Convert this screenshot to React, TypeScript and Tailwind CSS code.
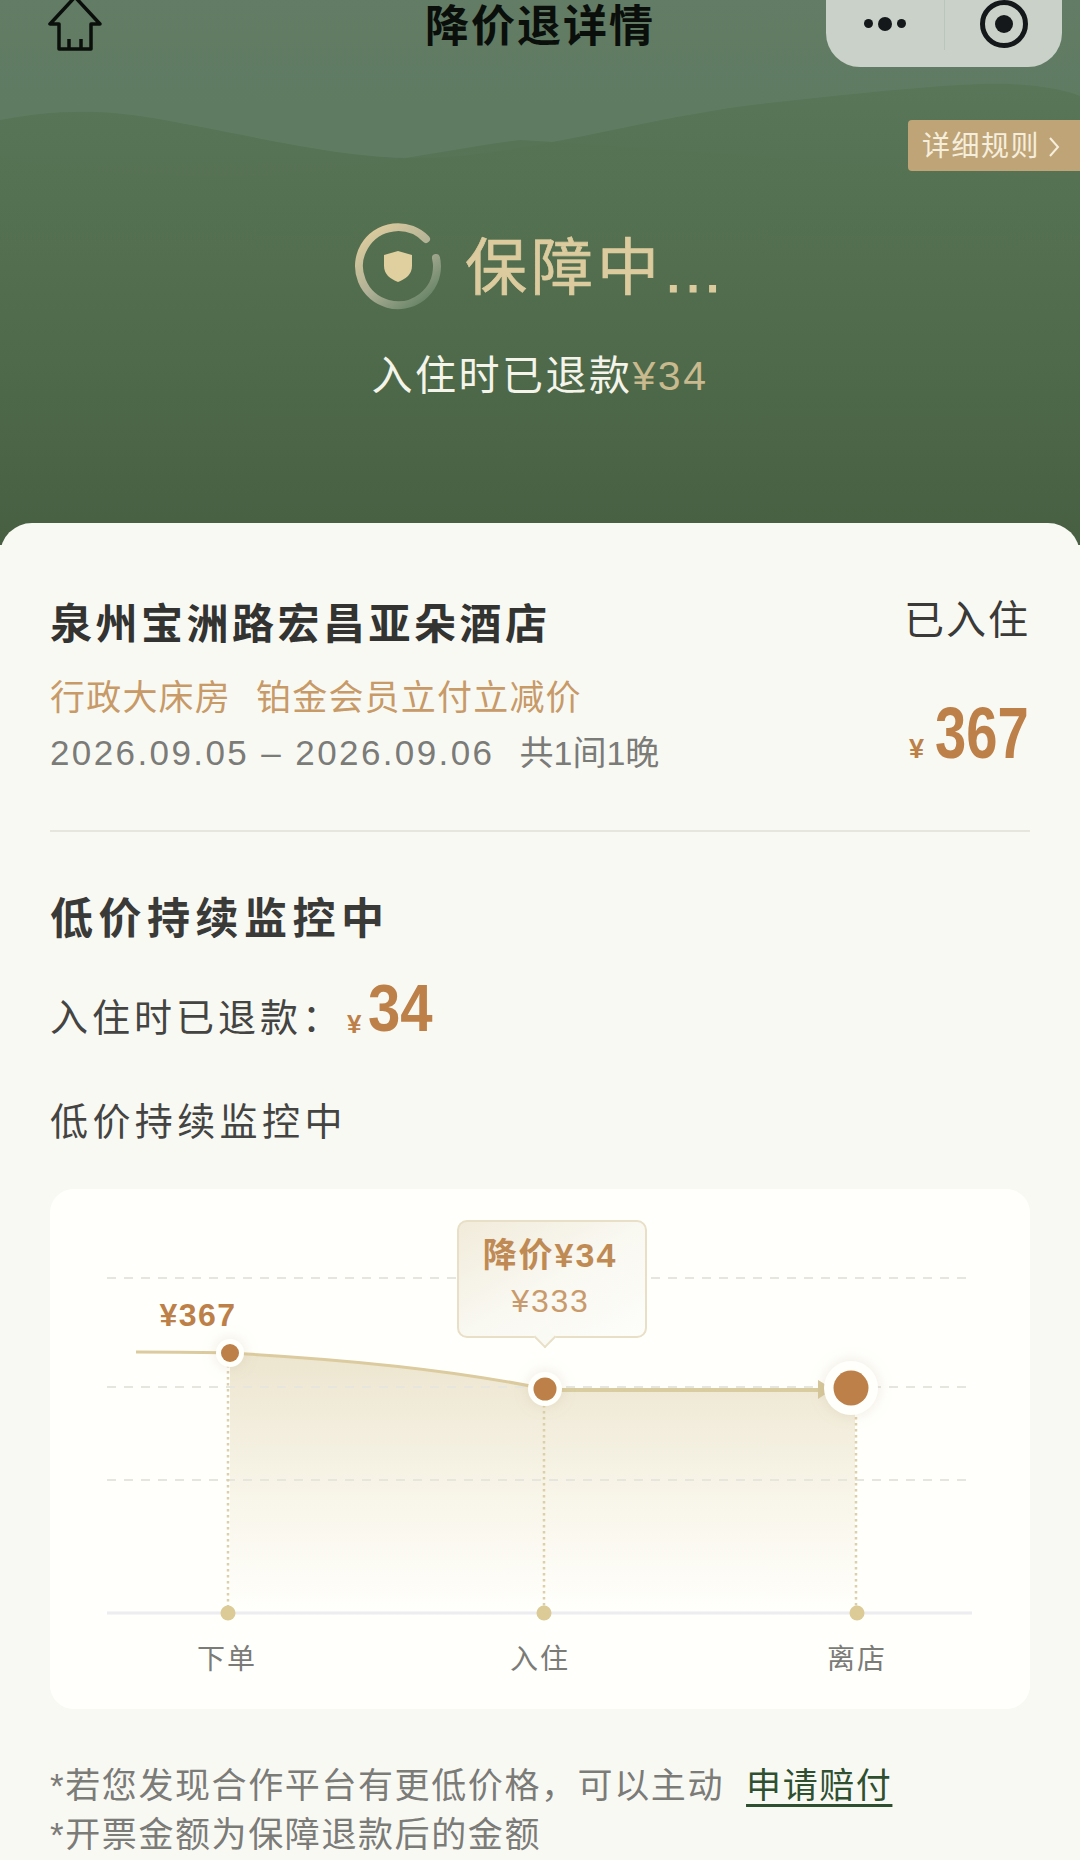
const App = () => {
  return (
    <div className="h-[1860px] w-[1080px] overflow-hidden bg-[#f9f9f4] font-['Liberation_Sans','Noto_Sans_CJK_SC',sans-serif]">
      {/* top green area */}
      <div className="relative h-[545px] bg-gradient-to-b from-[#637c65] via-[#5f7b62] via-20% to-[#5f7b62]">
        <svg className="absolute left-0 top-0" width="1080" height="545" viewBox="0 0 1080 545">
          <defs>
            <linearGradient id="hillA" gradientUnits="userSpaceOnUse" x1="0" y1="85" x2="0" y2="545">
              <stop offset="0" stopColor="#5a7659" />
              <stop offset="0.25" stopColor="#557152" />
              <stop offset="0.6" stopColor="#4e6a4a" />
              <stop offset="1" stopColor="#485f42" />
            </linearGradient>
            <linearGradient id="hillB" gradientUnits="userSpaceOnUse" x1="0" y1="140" x2="0" y2="260">
              <stop offset="0" stopColor="#567354" stopOpacity="0.9" />
              <stop offset="1" stopColor="#507050" stopOpacity="0" />
            </linearGradient>
          </defs>
          <path d="M0 120 C40 112 90 108 140 116 C230 130 330 158 415 158 C520 158 640 118 760 104 C850 94 960 82 1010 84 C1050 86 1070 92 1080 96 V545 H0 Z" fill="url(#hillA)" />
          <path d="M0 158 C80 172 170 178 250 176 C350 172 440 150 520 140 C700 150 900 170 1080 180 V300 H0 Z" fill="url(#hillB)" />
        </svg>

        <div className="relative flex h-[48px] items-start justify-between">
          <svg className="ml-[46px]" width="60" height="52" viewBox="0 0 60 52" fill="none" stroke="#0b0f0b" strokeWidth="3.5" strokeLinejoin="round">
            <path d="M29 -3 L4 24 H13 V49 H45 V24 H54 Z" />
            <path d="M23 49 V39 M35 49 V39" />
          </svg>
          <h1 className="absolute left-0 right-0 top-[2px] text-center text-[44px] leading-[50px] font-bold tracking-[2px] text-[#0b0f0b]">降价退详情</h1>
          <div className="mr-[18px] flex h-[67px] w-[236px] items-center rounded-b-[34px] bg-[#c9d1c8] pb-[20px]">
            <div className="flex w-[118px] items-center justify-center gap-[5px]">
              <span className="h-[9px] w-[9px] rounded-full bg-[#15181a]" />
              <span className="h-[14px] w-[14px] rounded-full bg-[#15181a]" />
              <span className="h-[9px] w-[9px] rounded-full bg-[#15181a]" />
            </div>
            <div className="h-[60px] w-px -translate-y-[4px] bg-[#bcc5bb]" />
            <div className="flex flex-1 items-center justify-center">
              <div className="flex h-[48px] w-[48px] items-center justify-center rounded-full border-[5px] border-[#15181a]">
                <span className="h-[18px] w-[18px] rounded-full bg-[#15181a]" />
              </div>
            </div>
          </div>
        </div>

        <div className="absolute right-0 top-[120px] flex h-[51px] w-[172px] items-center gap-[8px] rounded-l-[4px] bg-[#bfa477] pl-[14px] pt-[2px]">
          <span className="text-[28px] leading-none tracking-[1.5px] text-[#f6eedd]">详细规则</span>
          <svg width="12" height="22" viewBox="0 0 12 22" fill="none" stroke="#f6eedd" strokeWidth="2">
            <path d="M2 2 L10 11 L2 20" />
          </svg>
        </div>

        <div className="relative mt-[174px] flex items-center pl-[354px]">
          <svg width="88" height="88" viewBox="0 0 88 88" fill="none">
            <defs>
              <linearGradient id="ring" x1="0.2" y1="0" x2="0.9" y2="0.9">
                <stop offset="0" stopColor="#dccb9e" />
                <stop offset="0.55" stopColor="#aeb096" />
                <stop offset="1" stopColor="#6a8568" />
              </linearGradient>
            </defs>
            <path d="M72 17 A39 39 0 1 0 83 44 A39 39 0 0 0 82 36" stroke="url(#ring)" strokeWidth="8" strokeLinecap="round" />
            <path d="M44 29 L58 33 V44 C58 52 52 57 44 60 C36 57 30 52 30 44 V33 Z" fill="#e0cf9f" />
          </svg>
          <span className="ml-[23px] mt-[6px] text-[62px] leading-[70px] tracking-[4px] text-[#dccb9e] [-webkit-text-stroke:0.7px_#dccb9e]">保障中</span>
          <span className="ml-[2px] mt-[12px] text-[60px] leading-[70px] tracking-[3px] text-[#dccb9e] [-webkit-text-stroke:1.2px_#dccb9e]">...</span>
        </div>

        <div className="relative mt-[39px] text-center text-[41px] leading-[54px] tracking-[2.5px] text-[#f4f4ea]">
          入住时已退款<span className="text-[#c9b98e]">¥34</span>
        </div>
      </div>

      {/* white sheet */}
      <div className="relative -mt-[22px] rounded-t-[32px] bg-[#f9f9f4] px-[50px]">
        <div className="flex justify-between border-b-2 border-[#e6e6df] pb-[55px] pt-[74px]">
          <div>
            <div className="text-[42px] leading-[56px] font-bold tracking-[3.5px] text-[#333431]">泉州宝洲路宏昌亚朵酒店</div>
            <div className="mt-[23px] flex gap-[25px] text-[35px] leading-[44px] tracking-[1.2px] text-[#c79a68]">
              <span>行政大床房</span>
              <span>铂金会员立付立减价</span>
            </div>
            <div className="mt-[11px] flex gap-[25px] text-[35px] leading-[44px] tracking-[2.4px] text-[#7b7b78]">
              <span>2026.09.05 – 2026.09.06</span>
              <span className="text-[34px] tracking-normal">共1间1晚</span>
            </div>
          </div>
          <div className="flex flex-col items-end">
            <div className="-mt-[5px] text-[40px] leading-[56px] tracking-[2px] text-[#3a3a38]">已入住</div>
            <div className="mt-[49px] flex items-end text-[#bc8048]">
              <span className="mb-[6px] mr-[11px] text-[27px] leading-none font-bold">¥</span>
              <span className="w-[95px] origin-left scale-x-[.78] text-[72px] leading-[72px] font-bold whitespace-nowrap">367</span>
            </div>
          </div>
        </div>

        <h2 className="mt-[59px] text-[43px] leading-[56px] font-bold tracking-[5.5px] text-[#3a3a38]">低价持续监控中</h2>
        <div className="mt-[28px] flex items-end">
          <span className="text-[38px] leading-[52px] tracking-[4px] text-[#444442]">入住时已退款：</span>
          <span className="mb-[7px] ml-[3px] text-[26px] leading-none font-bold text-[#bc8048]">¥</span>
          <span className="mb-[3px] ml-[7px] w-[65px] origin-left scale-x-[.88] text-[66px] leading-[66px] font-bold whitespace-nowrap text-[#bc8048]">34</span>
        </div>
        <div className="mt-[52px] text-[38px] leading-[52px] tracking-[4.4px] text-[#444442]">低价持续监控中</div>

        {/* price chart */}
        <div className="relative mt-[41px] h-[520px] w-[980px] rounded-[24px] bg-[#fffffc]">
          <svg width="980" height="520" viewBox="0 0 980 520" fill="none">
            <defs>
              <linearGradient id="area" x1="0" y1="0" x2="0" y2="1">
                <stop offset="0" stopColor="#ece5cf" />
                <stop offset="0.55" stopColor="#f8f5e9" />
                <stop offset="1" stopColor="#fffffc" />
              </linearGradient>
              <filter id="glow" x="-60%" y="-60%" width="220%" height="220%">
                <feDropShadow dx="0" dy="0" stdDeviation="7" floodColor="#b9a67c" floodOpacity="0.25" />
              </filter>
            </defs>
            <path d="M180 164 C290 170 400 180 495 200 H805 V424 H180 Z" fill="url(#area)" />
            <g stroke="#e6e6de" strokeWidth="2" strokeDasharray="9 8">
              <path d="M57 89 H924" />
              <path d="M57 198 H924" />
              <path d="M57 291 H924" />
            </g>
            <path d="M57 424 H922" stroke="#edecf0" strokeWidth="3" />
            <path d="M86 163 C120 163 150 163 180 164 C290 170 400 180 495 200" stroke="#dccb9e" strokeWidth="3" />
            <path d="M495 201 H770" stroke="#d9cca0" strokeWidth="4" />
            <path d="M768 191 L783 200 L768 210 Z" fill="#d5c79a" />
            <g stroke="#dcd0a8" strokeWidth="2.5" strokeDasharray="2.5 3.5">
              <path d="M178 170 V424" />
              <path d="M494 210 V424" />
              <path d="M806 210 V424" />
            </g>
            <circle cx="178" cy="424" r="7.5" fill="#dccb97" />
            <circle cx="494" cy="424" r="7.5" fill="#dccb97" />
            <circle cx="807" cy="424" r="7.5" fill="#dccb97" />
            <circle cx="180" cy="164" r="14" fill="#fffffc" filter="url(#glow)" />
            <circle cx="180" cy="164" r="9" fill="#bc8048" />
            <circle cx="495" cy="200" r="17" fill="#fffffc" filter="url(#glow)" />
            <circle cx="495" cy="200" r="11.5" fill="#bc8048" />
            <circle cx="801" cy="199" r="27" fill="#fffffc" filter="url(#glow)" />
            <circle cx="801" cy="199" r="17.5" fill="#bc8048" />
            <text x="148" y="137" textAnchor="middle" fontSize="32" fontWeight="600" letterSpacing="1.5" fill="#bc8048">¥367</text>
            <text x="177" y="480" textAnchor="middle" fontSize="28" letterSpacing="2" fill="#7b7b78">下单</text>
            <text x="490" y="480" textAnchor="middle" fontSize="28" letterSpacing="2" fill="#7b7b78">入住</text>
            <text x="807" y="480" textAnchor="middle" fontSize="28" letterSpacing="2" fill="#7b7b78">离店</text>
          </svg>

          {/* tooltip over the chart */}
          <div className="absolute left-[407px] top-[31px] h-[118px] w-[190px] rounded-[10px] border-2 border-[#e8dfc6] bg-gradient-to-br from-[#f1ebda] via-[#f9f8f1] to-[#fdfdfa] text-center">
            <div className="-ml-[4px] mt-[12px] text-[34px] leading-[42px] font-semibold tracking-[2px] text-[#c08a54]">降价¥34</div>
            <div className="-ml-[3px] mt-[6px] text-[32px] leading-[38px] tracking-[1.8px] text-[#c99a6c]">¥333</div>
            <div className="absolute bottom-[-9px] left-[78px] h-[16px] w-[16px] rotate-45 border-b-2 border-r-2 border-[#e8dfc6] bg-[#fafaf4]" />
          </div>
        </div>

        <div className="mt-[52px] text-[35px] leading-[49px] tracking-[1.6px] text-[#7b7b78]">
          <div>
            *若您发现合作平台有更低价格，可以主动
            <span className="ml-[22px] text-[#2f5030] underline underline-offset-[6px]">申请赔付</span>
          </div>
          <div>*开票金额为保障退款后的金额</div>
        </div>
      </div>
    </div>
  )
}

export default App
